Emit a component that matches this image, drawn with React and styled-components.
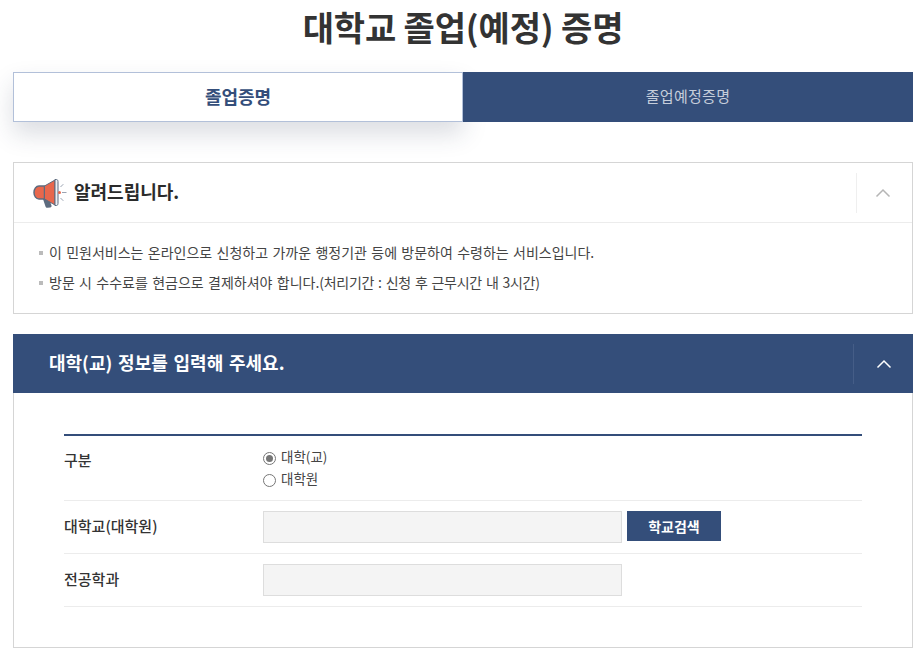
import React from 'react';
import styled, { createGlobalStyle } from 'styled-components';

const NAVY = '#344e7a';

const GlobalStyle = createGlobalStyle`
  html, body {
    margin: 0;
    padding: 0;
    background: #fff;
    overflow: hidden;
  }
  body {
    font-family: "Noto Sans CJK KR", "Noto Sans", sans-serif;
    color: #333;
  }
`;

const Page = styled.div`
  width: 900px;
  padding: 0 9px 0 13px;
`;

const Title = styled.h1`
  margin: 0;
  height: 72px;
  font-size: 34px;
  line-height: 53px;
  font-weight: 700;
  letter-spacing: -0.15px;
  text-align: center;
  color: #333;
`;

const Tabs = styled.div`
  display: flex;
  height: 50px;
  margin-bottom: 40px;
`;

const Tab = styled.div`
  flex: 0 0 50%;
  box-sizing: border-box;
  display: flex;
  align-items: center;
  justify-content: center;
  padding-bottom: 3px;
  font-size: ${(p) => (p.$active ? '18px' : '15px')};
  font-weight: ${(p) => (p.$active ? 700 : 400)};
  letter-spacing: ${(p) => (p.$active ? '0' : '0.3px')};
  color: ${(p) => (p.$active ? NAVY : '#c5cddb')};
  background: ${(p) => (p.$active ? '#fff' : NAVY)};
  border: ${(p) => (p.$active ? '1px solid #b2c0d9' : 'none')};
  box-shadow: ${(p) => (p.$active ? '0 12px 24px rgba(40, 55, 85, 0.17)' : 'none')};
`;

const Notice = styled.section`
  border: 1px solid #d5d5d5;
  margin-bottom: 20px;
`;

const NoticeHeader = styled.div`
  display: flex;
  align-items: center;
  height: 59px;
  padding-left: 19px;
  border-bottom: 1px solid #ececec;
`;

const NoticeTitle = styled.h2`
  flex: 1;
  margin: 0 0 3px 7px;
  font-size: 18px;
  font-weight: 700;
  color: #2b2b2b;
`;

const Toggle = styled.div`
  flex: 0 0 auto;
  box-sizing: border-box;
  width: 56px;
  height: 40px;
  padding-right: ${(p) => (p.$dark ? '0' : '3px')};
  display: flex;
  align-items: center;
  justify-content: center;
  border-left: 1px solid ${(p) => (p.$dark ? '#455d87' : '#efefef')};
`;

const NoticeList = styled.ul`
  list-style: none;
  margin: 0;
  padding: 14px 25px 16px;
`;

const NoticeItem = styled.li`
  position: relative;
  padding-left: 10px;
  height: 30px;
  font-size: 14px;
  line-height: 30px;
  word-spacing: 1.2px;
  color: #444;

  &::before {
    content: '';
    position: absolute;
    left: 0;
    top: 14px;
    width: 4px;
    height: 4px;
    background: #bbb;
  }
`;

const Period = styled.span`
  letter-spacing: -0.3px;
`;

const Panel = styled.section`
  border: 1px solid #d5d5d5;
  border-top: none;
`;

const PanelHeader = styled.div`
  display: flex;
  align-items: center;
  height: 59px;
  margin: 0 -1px;
  padding-left: 36px;
  background: ${NAVY};
`;

const PanelTitle = styled.h2`
  flex: 1;
  margin: 0 0 3px;
  font-size: 18px;
  font-weight: 700;
  word-spacing: 1.7px;
  color: #fff;
`;

const PanelToggle = styled(Toggle)`
  width: 60px;
`;

const PanelBody = styled.div`
  padding: 41px 50px 40px;
`;

const FormTable = styled.div`
  border-top: 2px solid ${NAVY};
`;

const Row = styled.div`
  display: flex;
  align-items: ${(p) => (p.$top ? 'flex-start' : 'center')};
  height: ${(p) => p.$height}px;
  box-sizing: border-box;
  border-bottom: 1px solid #ececec;
`;

const Label = styled.div`
  flex: 0 0 199px;
  font-size: 15px;
  font-weight: 500;
  color: #333;
  margin-bottom: ${(p) => (p.$top ? '0' : '3px')};
  padding-top: ${(p) => (p.$top ? '13px' : '0')};
`;

const RadioGroup = styled.div`
  display: flex;
  flex-direction: column;
  padding-top: 10px;
`;

const RadioLabel = styled.label`
  display: flex;
  align-items: center;
  height: 22px;
  font-size: 13.5px;
  color: #444;
`;

const RadioText = styled.span`
  margin-bottom: 3px;
`;

const RadioMark = styled.span`
  position: relative;
  box-sizing: border-box;
  width: 13px;
  height: 13px;
  margin: 2px 5px 0 0;
  border: 1px solid #767676;
  border-radius: 50%;
  background: #fff;

  &::after {
    content: '';
    display: ${(p) => (p.$checked ? 'block' : 'none')};
    position: absolute;
    inset: 2px;
    border-radius: 50%;
    background: #767676;
  }
`;

const TextInput = styled.input`
  width: 359px;
  height: 32px;
  box-sizing: border-box;
  padding: 0 8px;
  border: 1px solid #ddd;
  background: #f4f4f4;
  outline: none;
`;

const SearchButton = styled.button`
  width: 94px;
  height: 30px;
  margin: 0 0 2px 5px;
  padding: 0 0 1px;
  border: none;
  background: ${NAVY};
  color: #fff;
  font-family: inherit;
  font-size: 14px;
  font-weight: 700;
`;

const Chevron = ({ color }) => (
  <svg width="16" height="10" viewBox="0 0 16 10" fill="none">
    <path d="M1.500 8.500 8 2l6.500 6.500" stroke={color} strokeWidth="1.500" />
  </svg>
);

const Megaphone = () => (
  <svg width="34" height="30" viewBox="0 0 34 30">
    <path d="M10 21h6l2.500 6.500c.3 1-.3 1.700-1.300 1.900l-2.700.4c-1 .1-1.700-.3-2-1.300z" fill="#5d6b7e" />
    <path d="M6 8h5.500v13H6c-2.800 0-5-2.800-5-6.500S3.200 8 6 8z" fill="#e8674c" stroke="#5d6b7e" strokeWidth="1.500" />
    <path d="M11.500 8 22 2v25L11.500 21z" fill="#e8674c" stroke="#5d6b7e" strokeWidth="1" />
    <path d="M22 1.500h1.500c1 0 1.500 1 1.500 2v22c0 1-.5 2-1.500 2H22z" fill="#eef0f4" stroke="#5d6b7e" strokeWidth="1" />
    <circle cx="26.500" cy="14.500" r="1.500" fill="#e8674c" />
    <path d="M27.500 9l2.800-2.800M29 14.500h4.500M27.500 20l2.800 2.800" stroke="#9aa3b2" strokeWidth="1" fill="none" />
  </svg>
);

const App = () => {
  return (
    <Page>
      <GlobalStyle />
      <Title>대학교 졸업(예정) 증명</Title>
      <Tabs>
        <Tab $active>졸업증명</Tab>
        <Tab>졸업예정증명</Tab>
      </Tabs>
      <Notice>
        <NoticeHeader>
          <Megaphone />
          <NoticeTitle>알려드립니다.</NoticeTitle>
          <Toggle>
            <Chevron color="#b5b5b5" />
          </Toggle>
        </NoticeHeader>
        <NoticeList>
          <NoticeItem>이 민원서비스는 온라인으로 신청하고 가까운 행정기관 등에 방문하여 수령하는 서비스입니다.</NoticeItem>
          <NoticeItem>
            방문 시 수수료를 현금으로 결제하셔야 합니다.<Period>(처리기간 : 신청 후 근무시간 내 3시간)</Period>
          </NoticeItem>
        </NoticeList>
      </Notice>
      <Panel>
        <PanelHeader>
          <PanelTitle>대학(교) 정보를 입력해 주세요.</PanelTitle>
          <PanelToggle $dark>
            <Chevron color="#fff" />
          </PanelToggle>
        </PanelHeader>
        <PanelBody>
          <FormTable>
            <Row $top $height={65}>
              <Label $top>구분</Label>
              <RadioGroup>
                <RadioLabel>
                  <RadioMark $checked />
                  <RadioText>대학(교)</RadioText>
                </RadioLabel>
                <RadioLabel>
                  <RadioMark />
                  <RadioText>대학원</RadioText>
                </RadioLabel>
              </RadioGroup>
            </Row>
            <Row $height={53}>
              <Label>대학교(대학원)</Label>
              <TextInput readOnly />
              <SearchButton>학교검색</SearchButton>
            </Row>
            <Row $height={53}>
              <Label>전공학과</Label>
              <TextInput readOnly />
            </Row>
          </FormTable>
        </PanelBody>
      </Panel>
    </Page>
  );
};

export default App;
